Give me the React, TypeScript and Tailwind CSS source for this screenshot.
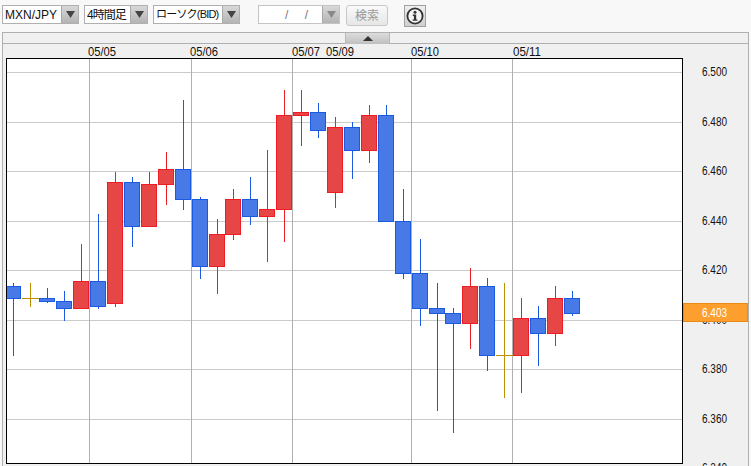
const jp = "font-['Liberation_Sans','Noto_Sans_CJK_JP',sans-serif]";

type Candle = { x: number; hi: number; lo: number; top: number; bot: number; c: 'u' | 'd' | 'n'; x0?: number };

const candles: Candle[] = [
  { x: 13, hi: 283, lo: 356, top: 286, bot: 298, c: 'd', x0: 6 },
  { x: 30, hi: 283, lo: 307, top: 298, bot: 298, c: 'n' },
  { x: 47, hi: 288, lo: 303, top: 298, bot: 301, c: 'd' },
  { x: 64, hi: 291, lo: 321, top: 301, bot: 308, c: 'd' },
  { x: 81, hi: 244, lo: 308, top: 281, bot: 308, c: 'u' },
  { x: 98, hi: 214, lo: 309, top: 281, bot: 306, c: 'd' },
  { x: 115, hi: 172, lo: 307, top: 182, bot: 303, c: 'u' },
  { x: 132, hi: 177, lo: 247, top: 182, bot: 226, c: 'd' },
  { x: 149, hi: 172, lo: 226, top: 184, bot: 226, c: 'u' },
  { x: 166, hi: 152, lo: 205, top: 169, bot: 184, c: 'u' },
  { x: 183, hi: 100, lo: 210, top: 169, bot: 199, c: 'd' },
  { x: 200, hi: 197, lo: 279, top: 199, bot: 266, c: 'd' },
  { x: 217, hi: 219, lo: 294, top: 234, bot: 266, c: 'u' },
  { x: 233, hi: 189, lo: 240, top: 199, bot: 234, c: 'u' },
  { x: 250, hi: 177, lo: 225, top: 199, bot: 216, c: 'd' },
  { x: 267, hi: 150, lo: 262, top: 209, bot: 216, c: 'u' },
  { x: 284, hi: 90, lo: 242, top: 115, bot: 209, c: 'u' },
  { x: 301, hi: 90, lo: 146, top: 112, bot: 115, c: 'u' },
  { x: 318, hi: 103, lo: 138, top: 112, bot: 130, c: 'd' },
  { x: 335, hi: 117, lo: 208, top: 127, bot: 192, c: 'u' },
  { x: 352, hi: 122, lo: 179, top: 127, bot: 150, c: 'd' },
  { x: 369, hi: 105, lo: 163, top: 115, bot: 150, c: 'u' },
  { x: 386, hi: 105, lo: 221, top: 115, bot: 221, c: 'd' },
  { x: 403, hi: 189, lo: 279, top: 221, bot: 273, c: 'd' },
  { x: 420, hi: 239, lo: 326, top: 273, bot: 308, c: 'd' },
  { x: 437, hi: 283, lo: 411, top: 308, bot: 313, c: 'd' },
  { x: 453, hi: 308, lo: 433, top: 313, bot: 323, c: 'd' },
  { x: 470, hi: 268, lo: 349, top: 286, bot: 323, c: 'u' },
  { x: 487, hi: 278, lo: 371, top: 286, bot: 355, c: 'd' },
  { x: 504, hi: 283, lo: 398, top: 355, bot: 355, c: 'n' },
  { x: 521, hi: 298, lo: 393, top: 318, bot: 355, c: 'u' },
  { x: 538, hi: 306, lo: 366, top: 318, bot: 333, c: 'd' },
  { x: 555, hi: 286, lo: 346, top: 298, bot: 333, c: 'u' },
  { x: 572, hi: 291, lo: 316, top: 298, bot: 313, c: 'd' },
];

const gridY = [72, 122, 171, 221, 270, 320, 369, 419];
const gridX = [89, 191, 292, 411, 512];
const dates = [
  { x: 102, t: '05/05' },
  { x: 204, t: '05/06' },
  { x: 306, t: '05/07' },
  { x: 340, t: '05/09' },
  { x: 425, t: '05/10' },
  { x: 527, t: '05/11' },
];
const prices = [
  { y: 76, t: '6.500' },
  { y: 126, t: '6.480' },
  { y: 175, t: '6.460' },
  { y: 225, t: '6.440' },
  { y: 274, t: '6.420' },
  { y: 324, t: '6.400' },
  { y: 373, t: '6.380' },
  { y: 423, t: '6.360' },
  { y: 472, t: '6.340' },
];

const stroke = { u: '#ee1c25', d: '#1a5ae0', n: '#b89000' };
const fill = { u: '#e64646', d: '#477ae6', n: '#b89000' };

function Arrow({ dim }: { dim?: boolean }) {
  return (
    <svg width="9" height="7" viewBox="0 0 9 7">
      <path d="M0 0H9L4.5 7Z" fill={dim ? '#8a8a8a' : '#444'} />
    </svg>
  );
}

function DropButton({ dim }: { dim?: boolean }) {
  return (
    <div className="flex h-full w-[17px] items-center justify-center border-l border-[#a8a8a8] bg-gradient-to-b from-[#d8d8d8] to-[#b4b4b4]">
      <Arrow dim={dim} />
    </div>
  );
}

function Select({ w, label, cls }: { w: string; label: string; cls: string }) {
  return (
    <div className={`flex h-[19px] items-center border border-[#b0b0b0] bg-white ${w}`}>
      <span className={`flex-1 overflow-hidden whitespace-nowrap pl-[2px] leading-none text-[#111] ${cls}`}>{label}</span>
      <DropButton />
    </div>
  );
}

function Chart() {
  return (
    <svg width="745" height="433" viewBox="3 33 745 433" className="block" fontFamily="'Liberation Sans', sans-serif">
      <rect x="3" y="33" width="745" height="433" fill="#f0f0f0" />
      <rect x="6.5" y="58.5" width="676" height="405" fill="#fff" />
      {gridY.map(y => (
        <line key={y} x1="7" x2="682" y1={y + 0.5} y2={y + 0.5} stroke="#cbcbcb" />
      ))}
      {gridX.map(x => (
        <line key={x} x1={x + 0.5} x2={x + 0.5} y1="59" y2="463" stroke="#b0b0b0" />
      ))}
      {dates.map(d => (
        <text key={d.t} x={d.x} y="56" fontSize="13" textAnchor="middle" textLength="28" lengthAdjust="spacingAndGlyphs" fill="#111">
          {d.t}
        </text>
      ))}
      {candles.map(k => {
        const left = k.x0 ?? k.x - 8;
        const right = k.x + 7;
        return (
          <g key={k.x}>
            <line x1={k.x + 0.5} x2={k.x + 0.5} y1={k.hi} y2={k.lo} stroke={stroke[k.c]} />
            {k.c === 'n' ? (
              <line x1={k.x - 8} x2={k.x + 9} y1={k.top + 0.5} y2={k.top + 0.5} stroke={stroke.n} />
            ) : (
              <rect x={left + 0.5} y={k.top + 0.5} width={right - left} height={k.bot - k.top} fill={fill[k.c]} stroke={stroke[k.c]} />
            )}
          </g>
        );
      })}
      <rect x="6.5" y="58.5" width="676" height="405" fill="none" stroke="#000" />
      {prices.map(p => (
        <text key={p.t} x="702" y={p.y} fontSize="13" textLength="25" lengthAdjust="spacingAndGlyphs" fill="#111">
          {p.t}
        </text>
      ))}
      <rect x="683.5" y="303.5" width="64" height="18" fill="#fd9f2f" stroke="#e98a14" />
      <text x="702" y="317" fontSize="13" textLength="25" lengthAdjust="spacingAndGlyphs" fill="#fff">
        6.403
      </text>
    </svg>
  );
}

export default function App() {
  return (
    <div className={`h-[466px] w-[751px] overflow-hidden bg-[#f8f8f8] ${jp}`}>
      <div className="flex h-[32px] items-start pl-[2px] pt-[5px]">
        <Select w="w-[77px]" label="MXN/JPY" cls="text-[12px]" />
        <div className="ml-[5px]">
          <Select w="w-[64px]" label="4時間足" cls="text-[12px] tracking-[-1px]" />
        </div>
        <div className="ml-[5px]">
          <Select w="w-[87px]" label="ローソク(BID)" cls="text-[11px] tracking-[-0.8px]" />
        </div>
        <div className="ml-[18px] flex h-[19px] w-[82px] items-center border border-[#c4c4c4] bg-white">
          <span className="flex-1 pl-[26px] text-[12px] leading-none text-[#777] [word-spacing:13px]">/ /</span>
          <DropButton dim />
        </div>
        <button className="ml-[6px] flex h-[21px] w-[42px] items-center justify-center rounded-[3px] border border-[#c8c8c8] bg-gradient-to-b from-[#fafafa] to-[#e6e6e6] text-[12px] text-[#999]">
          検索
        </button>
        <button className="ml-[16px] flex h-[22px] w-[22px] items-center justify-center border border-[#a0a0a0] bg-gradient-to-b from-[#f0f0f0] to-[#cfcfcf]">
          <svg width="18" height="18" viewBox="0 0 18 18">
            <circle cx="9" cy="9" r="7.6" fill="#f4f4f4" stroke="#333" strokeWidth="1.8" />
            <circle cx="9" cy="5.2" r="1.5" fill="#333" />
            <path d="M6.8 7.6H10.2V12.4H11.4V13.8H6.6V12.4H7.9V9H6.8Z" fill="#333" />
          </svg>
        </button>
      </div>
      <div className="ml-[2px] h-[434px] w-[747px] border-l border-r border-t border-[#b0b0b0]">
        <div className="relative">
          <Chart />
          <div className="absolute left-0 top-[10px] h-px w-full bg-[#b0b0b0]" />
          <div className="absolute left-[342px] top-0 flex h-[11px] w-[45px] items-center justify-center border-x border-[#b8b8b8] bg-gradient-to-b from-[#dcdcdc] to-[#c0c0c0]">
            <svg width="10" height="5" viewBox="0 0 10 5">
              <path d="M0 5L5 0L10 5Z" fill="#333" />
            </svg>
          </div>
        </div>
      </div>
    </div>
  );
}
